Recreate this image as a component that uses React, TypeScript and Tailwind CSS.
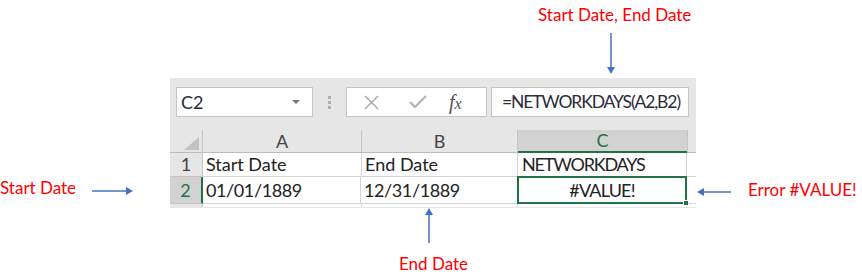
import React from "react";

const ui = { fontFamily: "Lato, 'Open Sans', sans-serif" };

function ArrowRight({ w }: { w: number }) {
  return (
    <svg width={w} height="10" viewBox={`0 0 ${w} 10`}>
      <line x1="0" y1="5" x2={w - 6} y2="5" stroke="#4472C4" strokeWidth="1.5" />
      <polygon points={`${w - 7},1 ${w},5 ${w - 7},9`} fill="#4472C4" />
    </svg>
  );
}

function ArrowLeft({ w }: { w: number }) {
  return (
    <svg width={w} height="10" viewBox={`0 0 ${w} 10`}>
      <line x1="6" y1="5" x2={w} y2="5" stroke="#4472C4" strokeWidth="1.5" />
      <polygon points="7,1 0,5 7,9" fill="#4472C4" />
    </svg>
  );
}

function ArrowDown({ h }: { h: number }) {
  return (
    <svg width="10" height={h} viewBox={`0 0 10 ${h}`}>
      <line x1="5" y1="0" x2="5" y2={h - 6} stroke="#4472C4" strokeWidth="1.5" />
      <polygon points={`1,${h - 7} 9,${h - 7} 5,${h}`} fill="#4472C4" />
    </svg>
  );
}

function ArrowUp({ h }: { h: number }) {
  return (
    <svg width="10" height={h} viewBox={`0 0 10 ${h}`}>
      <line x1="5" y1="6" x2="5" y2={h} stroke="#4472C4" strokeWidth="1.5" />
      <polygon points="1,7 9,7 5,0" fill="#4472C4" />
    </svg>
  );
}

function FormulaBar() {
  return (
    <div className="flex items-start pt-[9px] pl-[6px] h-[52px]">
      <div className="w-[137px] shrink-0 h-[30px] bg-white border border-[#c6c6c6] flex items-center justify-between pl-[4px] pr-[12px]">
        <span className="text-[18px] text-[#2b2b3b]">C2</span>
        <svg width="8" height="5" viewBox="0 0 8 5">
          <polygon points="0,0 8,0 4,4" fill="#7a7a7a" />
        </svg>
      </div>
      <div className="w-[33px] shrink-0 h-[30px] flex flex-col items-center justify-center gap-[2px]">
        <div className="w-[3px] h-[3px] bg-[#b0b0b0]" />
        <div className="w-[3px] h-[3px] bg-[#b0b0b0]" />
        <div className="w-[3px] h-[3px] bg-[#b0b0b0]" />
      </div>
      <div className="w-[141px] shrink-0 h-[30px] bg-white border border-[#c6c6c6] flex items-center pl-[17px]">
        <svg width="15" height="15" viewBox="0 0 15 15">
          <path d="M1 1 L14 14 M14 1 L1 14" stroke="#a6a6a6" strokeWidth="1.4" />
        </svg>
        <svg width="18" height="14" viewBox="0 0 18 14" className="ml-[30px]">
          <path d="M1 7 L6 12 L17 1" stroke="#b4b4b4" strokeWidth="2.2" fill="none" />
        </svg>
        <span
          className="ml-[22px] italic text-[20px] text-[#505050] leading-none"
          style={{ fontFamily: "'Liberation Serif', serif" }}
        >
          f<span className="text-[16px]">x</span>
        </span>
      </div>
      <div className="w-[198px] shrink-0 h-[30px] ml-[4px] bg-white border border-[#c6c6c6] flex items-center pl-[10px] overflow-hidden">
        <span className="text-[17.5px] tracking-[-1.1px] text-[#2b2b3b] whitespace-nowrap">=NETWORKDAYS(A2,B2)</span>
      </div>
    </div>
  );
}

function Sheet() {
  return (
    <div className="flex flex-col">
      {/* column headers */}
      <div className="flex h-[23px] border-b border-[#bcbcbc] text-[18px] text-[#444]">
        <div className="w-[33px] shrink-0 border-r border-[#c6c6c6] flex items-end justify-end pr-[3px] pb-[2px]">
          <svg width="15" height="13" viewBox="0 0 15 13">
            <polygon points="15,0 15,13 0,13" fill="#c3c3c3" />
          </svg>
        </div>
        <div className="w-[159px] shrink-0 border-r border-[#c6c6c6] flex items-center justify-center">A</div>
        <div className="w-[156px] shrink-0 border-r border-[#c6c6c6] flex items-center justify-center">B</div>
        <div className="w-[169px] shrink-0 bg-[#d2d2d2] border-b-2 border-[#217346] -mb-[1px] flex items-center justify-center text-[#217346]">
          C
        </div>
        <div className="flex-1 border-l border-[#c6c6c6]" />
      </div>
      {/* row 1 */}
      <div className="flex h-[24px] bg-white text-[18px] text-[#222]">
        <div className="w-[33px] shrink-0 bg-[#e6e6e6] border-r border-b border-[#c6c6c6] flex items-center justify-center text-[#444]">1</div>
        <div className="w-[159px] shrink-0 border-r border-b border-[#d4d4d4] flex items-center pl-[3px]">Start Date</div>
        <div className="w-[156px] shrink-0 border-r border-b border-[#d4d4d4] flex items-center pl-[3px]">End Date</div>
        <div className="w-[169px] shrink-0 border-r border-b border-[#d4d4d4] flex items-center pl-[4px] tracking-[-1.2px]">NETWORKDAYS</div>
        <div className="flex-1 border-b border-[#d4d4d4]" />
      </div>
      {/* row 2 */}
      <div className="flex h-[27px] bg-white text-[18px] text-[#222]">
        <div className="w-[33px] shrink-0 bg-[#d2d2d2] border-r-2 border-b border-r-[#217346] border-b-[#c6c6c6] flex items-center justify-center text-[#217346]">
          2
        </div>
        <div className="w-[158px] shrink-0 border-r border-b border-[#d4d4d4] flex items-center pl-[3px] tracking-[-0.4px]">01/01/1889</div>
        <div className="w-[156px] shrink-0 border-b border-[#d4d4d4] flex items-center pl-[3px] tracking-[-0.4px]">12/31/1889</div>
        <div className="relative w-[170px] shrink-0 -mt-[1px] border-2 border-[#217346] flex items-center justify-center tracking-[-0.8px]">
          #VALUE!
          <div className="absolute -right-[4px] -bottom-[4px] w-[6px] h-[6px] bg-[#217346] border border-white" />
        </div>
        <div className="flex-1 border-b border-[#d4d4d4]" />
      </div>
      {/* partial row 3 */}
      <div className="flex h-[3px] bg-white">
        <div className="w-[33px] shrink-0 bg-[#e6e6e6] border-r border-[#c6c6c6]" />
        <div className="w-[159px] shrink-0 border-r border-[#d4d4d4]" />
        <div className="w-[156px] shrink-0 border-r border-[#d4d4d4]" />
        <div className="w-[169px] shrink-0 border-r border-[#d4d4d4]" />
      </div>
    </div>
  );
}

export default function App() {
  return (
    <div className="w-[862px] h-[275px] bg-white overflow-hidden" style={ui}>
      {/* top callout */}
      <div className="h-[78px] flex flex-col">
        <div className="pl-[538px] pt-[4px] text-[17px] leading-[22px] text-[#ff0000] whitespace-nowrap">
          Start Date, End Date
        </div>
        <div className="pl-[606px] pt-[7px]">
          <ArrowDown h={41} />
        </div>
      </div>

      <div className="flex h-[130px]">
        <div className="w-[170px] shrink-0 flex items-start pt-[99px]">
          <span className="text-[17px] leading-[22px] text-[#ff0000] whitespace-nowrap">Start Date</span>
          <div className="ml-auto mr-[37px] pt-[9px]">
            <ArrowRight w={41} />
          </div>
        </div>

        <div className="w-[526px] shrink-0 h-[130px] bg-[#e6e6e6] flex flex-col">
          <FormulaBar />
          <Sheet />
        </div>

        <div className="flex-1 min-w-0 flex items-start pt-[101px]">
          <div className="pl-[1px] pt-[8px] shrink-0">
            <ArrowLeft w={34} />
          </div>
          <span className="ml-[17px] text-[17px] leading-[22px] text-[#ff0000] whitespace-nowrap">Error #VALUE!</span>
        </div>
      </div>

      <div className="flex flex-col">
        <div className="pl-[424px]">
          <ArrowUp h={35} />
        </div>
        <div className="pl-[399px] pt-[10px] text-[17px] leading-[22px] text-[#ff0000] whitespace-nowrap">End Date</div>
      </div>
    </div>
  );
}
